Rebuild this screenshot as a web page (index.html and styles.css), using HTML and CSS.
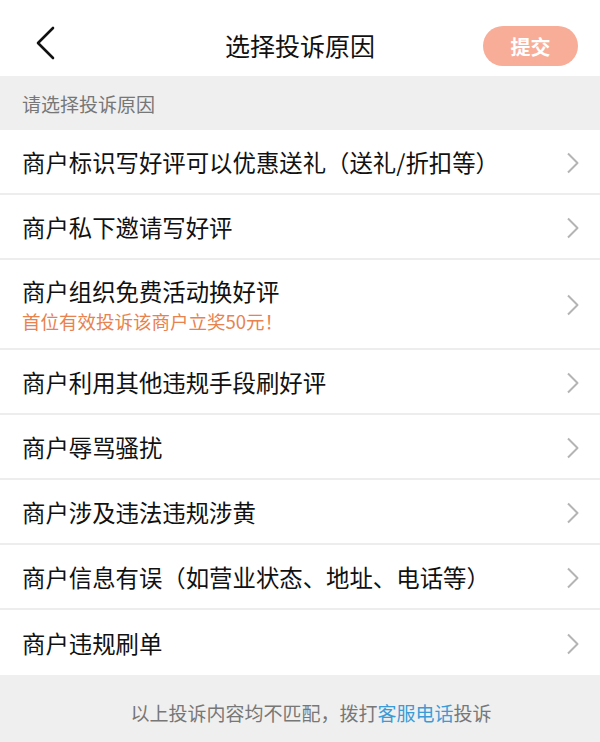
FILE: index.html
```html
<!DOCTYPE html>
<html lang="zh-CN">
<head>
<meta charset="utf-8">
<title>选择投诉原因</title>
<link rel="stylesheet" href="styles.css">
</head>
<body>
<div class="page">
  <header class="topbar">
    <span class="back">
      <svg width="20" height="34" viewBox="0 0 20 34"><path d="M18 2 L3 17 L18 32" fill="none" stroke="#111" stroke-width="2.6" stroke-linecap="round" stroke-linejoin="round"/></svg>
    </span>
    <h1 class="title">选择投诉原因</h1>
    <button class="submit">提交</button>
  </header>
  <div class="section-label">请选择投诉原因</div>
  <ul class="list">
    <li class="row"><div class="row-text"><div class="main">商户标识写好评可以优惠送礼（送礼/折扣等）</div></div><svg class="chev" width="14" height="22" viewBox="0 0 14 22"><path d="M2 1.5 L11.5 11 L2 20.5" fill="none" stroke="#b4b4b4" stroke-width="2" stroke-linejoin="round"/></svg></li>
    <li class="row"><div class="row-text"><div class="main">商户私下邀请写好评</div></div><svg class="chev" width="14" height="22" viewBox="0 0 14 22"><path d="M2 1.5 L11.5 11 L2 20.5" fill="none" stroke="#b4b4b4" stroke-width="2" stroke-linejoin="round"/></svg></li>
    <li class="row tall"><div class="row-text"><div class="main">商户组织免费活动换好评</div><div class="sub">首位有效投诉该商户立奖50元！</div></div><svg class="chev" width="14" height="22" viewBox="0 0 14 22"><path d="M2 1.5 L11.5 11 L2 20.5" fill="none" stroke="#b4b4b4" stroke-width="2" stroke-linejoin="round"/></svg></li>
    <li class="row"><div class="row-text"><div class="main">商户利用其他违规手段刷好评</div></div><svg class="chev" width="14" height="22" viewBox="0 0 14 22"><path d="M2 1.5 L11.5 11 L2 20.5" fill="none" stroke="#b4b4b4" stroke-width="2" stroke-linejoin="round"/></svg></li>
    <li class="row"><div class="row-text"><div class="main">商户辱骂骚扰</div></div><svg class="chev" width="14" height="22" viewBox="0 0 14 22"><path d="M2 1.5 L11.5 11 L2 20.5" fill="none" stroke="#b4b4b4" stroke-width="2" stroke-linejoin="round"/></svg></li>
    <li class="row"><div class="row-text"><div class="main">商户涉及违法违规涉黄</div></div><svg class="chev" width="14" height="22" viewBox="0 0 14 22"><path d="M2 1.5 L11.5 11 L2 20.5" fill="none" stroke="#b4b4b4" stroke-width="2" stroke-linejoin="round"/></svg></li>
    <li class="row"><div class="row-text"><div class="main">商户信息有误（如营业状态、地址、电话等）</div></div><svg class="chev" width="14" height="22" viewBox="0 0 14 22"><path d="M2 1.5 L11.5 11 L2 20.5" fill="none" stroke="#b4b4b4" stroke-width="2" stroke-linejoin="round"/></svg></li>
    <li class="row last"><div class="row-text"><div class="main">商户违规刷单</div></div><svg class="chev" width="14" height="22" viewBox="0 0 14 22"><path d="M2 1.5 L11.5 11 L2 20.5" fill="none" stroke="#b4b4b4" stroke-width="2" stroke-linejoin="round"/></svg></li>
  </ul>
  <footer class="footer">以上投诉内容均不匹配，拨打<span class="link">客服电话</span>投诉</footer>
</div>
</body>
</html>
```
FILE: styles.css
```css
* { box-sizing: border-box; }
html, body { margin: 0; padding: 0; }
body {
  font-family: "Noto Sans CJK SC", "Noto Sans", sans-serif;
  background: #efefef;
  color: #111;
}
.page { width: 600px; height: 742px; display: flex; flex-direction: column; overflow: hidden; }
.topbar {
  height: 76px;
  background: #fff;
  display: flex;
  align-items: center;
  justify-content: space-between;
  padding: 14px 22px 0 35px;
  position: relative;
}
.back { display: flex; width: 20px; height: 34px; margin-top: -4px; }
.title {
  position: absolute;
  left: 0; right: 0; top: 14px;
  margin: 0;
  text-align: center;
  height: 62px;
  line-height: 62px;
  font-size: 25px;
  font-weight: 400;
  pointer-events: none;
}
.submit {
  width: 95px;
  height: 40px;
  border: none;
  border-radius: 20px;
  background: #f8ad98;
  color: #fff;
  font-family: inherit;
  font-size: 20px;
  font-weight: 700;
  padding: 0;
  margin-top: 2px;
}
.section-label {
  height: 54px;
  display: flex;
  align-items: center;
  padding-left: 22px;
  font-size: 19px;
  color: #777;
  background: #efefef;
}
.list { list-style: none; margin: 0; padding: 0; background: #fff; }
.row {
  display: flex;
  align-items: center;
  justify-content: space-between;
  height: 65px;
  padding: 0 20px 0 22px;
  border-bottom: 2px solid #ededed;
}
.row.tall { height: 90px; }
.row.last { border-bottom: none; }
.main { font-size: 23.4px; line-height: 30px; color: #111; }
.sub { font-size: 18.5px; line-height: 24px; color: #e8824f; margin-top: 3px; }
.chev { display: block; margin-top: 2px; }
.footer {
  flex: 1;
  background: #efefef;
  display: flex;
  align-items: center;
  justify-content: center;
  font-size: 19px;
  color: #777;
  padding: 8px 0 0 22px;
}
.link { color: #3a9cd6; }
```
